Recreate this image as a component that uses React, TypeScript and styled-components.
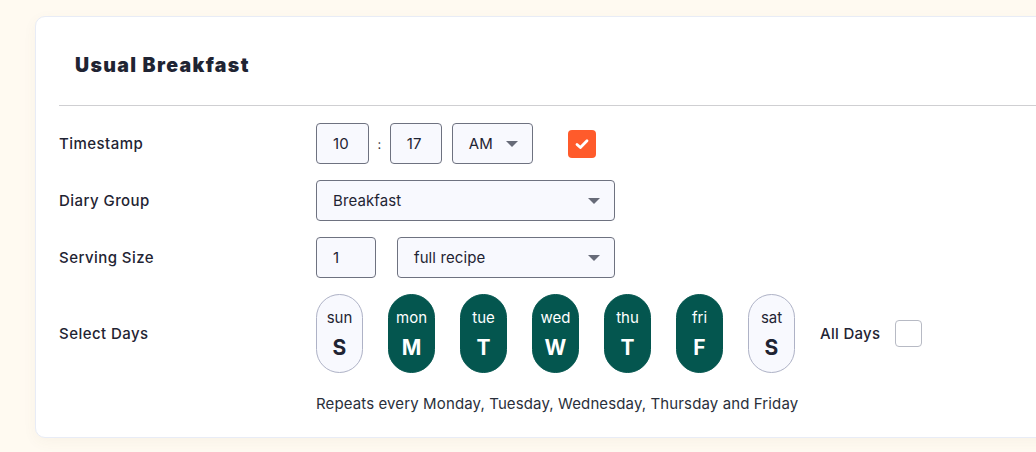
import React from "react";
import styled, { createGlobalStyle } from "styled-components";

const Global = createGlobalStyle`
  html, body { margin: 0; padding: 0; }
  body {
    background: #fffaf1;
    font-family: Inter, "Noto Sans", sans-serif;
    color: #1f2433;
    overflow: hidden;
  }
`;

const Page = styled.div`
  padding: 16px 0 0 35px;
  width: 1036px;
  height: 452px;
  box-sizing: border-box;
  overflow: hidden;
`;

const Card = styled.section`
  width: 1100px;
  height: 422px;
  box-sizing: border-box;
  background: #fff;
  border: 1px solid #e8ecf6;
  border-radius: 10px;
  box-shadow: 0 4px 14px rgba(120, 100, 60, 0.05);
  padding: 0 0 0 23px;
`;

const Header = styled.header`
  height: 89px;
  display: flex;
  align-items: center;
  padding: 0 0 0 16px;
  border-bottom: 1px solid #cfcfd2;
  box-sizing: border-box;
`;

const Title = styled.h1`
  margin: 0;
  padding-top: 8px;
  font-family: Inter, sans-serif;
  font-weight: 900;
  font-size: 19.5px;
  letter-spacing: 1.35px;
  color: #1f2433;
`;

const Form = styled.div`
  display: grid;
  grid-template-columns: 257px 1fr;
  row-gap: 16px;
  padding-top: 17px;
  align-items: center;
`;

const Label = styled.div`
  font-size: 15px;
  font-weight: 500;
  letter-spacing: 0.45px;
  color: #1f2433;
`;

const Controls = styled.div<{ $gap?: number }>`
  display: flex;
  align-items: center;
  gap: ${(p) => p.$gap ?? 10}px;
  height: 41px;
`;

const Box = styled.div<{ $w: number }>`
  width: ${(p) => p.$w}px;
  height: 41px;
  box-sizing: border-box;
  border: 1px solid #6e7280;
  border-radius: 4px;
  background: #f8f9fe;
  display: flex;
  align-items: center;
  padding: 0 16px;
  font-size: 15px;
  letter-spacing: 0.1px;
  color: #1f2433;
`;

const SelectBox = styled(Box)`
  justify-content: space-between;
  padding-right: 14px;
`;

const Caret = styled.span`
  width: 0;
  height: 0;
  border-left: 6px solid transparent;
  border-right: 6px solid transparent;
  border-top: 6px solid #676b78;
`;

const Colon = styled.span`
  font-size: 13px;
  color: #333;
  margin: 0 -1.5px;
`;

const Check = styled.div<{ $on?: boolean }>`
  width: ${(p) => (p.$on ? 28 : 27)}px;
  height: ${(p) => (p.$on ? 28 : 27)}px;
  box-sizing: border-box;
  border-radius: 4px;
  background: ${(p) => (p.$on ? "#ff5b2b" : "#fff")};
  border: ${(p) => (p.$on ? "none" : "1px solid #b7bac4")};
  display: flex;
  align-items: center;
  justify-content: center;
`;

const DaysRow = styled.div`
  display: flex;
  align-items: center;
  gap: 25px;
  height: 79px;
`;

const Pill = styled.div<{ $on: boolean }>`
  width: 47px;
  height: 79px;
  box-sizing: border-box;
  border-radius: 24px;
  border: 1px solid ${(p) => (p.$on ? "#04564f" : "#aeb2c6")};
  background: ${(p) => (p.$on ? "#04564f" : "#f8f9fe")};
  color: ${(p) => (p.$on ? "#ffffff" : "#1f2433")};
  display: flex;
  flex-direction: column;
  align-items: center;
  padding-top: 14px;
`;

const DayName = styled.span`
  font-size: 15px;
  line-height: 18px;
`;

const DayLetter = styled.span`
  font-size: 21px;
  font-weight: 700;
  line-height: 24px;
  margin-top: 9px;
`;

const AllDays = styled.div`
  display: flex;
  align-items: center;
  gap: 15px;
  font-size: 15px;
  font-weight: 500;
  letter-spacing: 0.3px;
`;

const Repeat = styled.div`
  grid-column: 2;
  font-size: 15px;
  letter-spacing: 0.12px;
  color: #2a2f3b;
  margin-top: 5px;
`;

const days = [
  ["sun", "S", false],
  ["mon", "M", true],
  ["tue", "T", true],
  ["wed", "W", true],
  ["thu", "T", true],
  ["fri", "F", true],
  ["sat", "S", false],
] as const;

export default function App() {
  return (
    <>
      <Global />
      <Page>
        <Card>
          <Header>
            <Title>Usual Breakfast</Title>
          </Header>
          <Form>
            <Label>Timestamp</Label>
            <Controls>
              <Box $w={53}>10</Box>
              <Colon>:</Colon>
              <Box $w={52}>17</Box>
              <SelectBox $w={81}>
                AM <Caret />
              </SelectBox>
              <Check $on style={{ marginLeft: 25 }}>
                <svg width="16" height="16" viewBox="0 0 16 16">
                  <path d="M3 8.4 L6.4 11.6 L13 4.8" fill="none" stroke="#fff" strokeWidth="2.8" strokeLinecap="round" strokeLinejoin="round" />
                </svg>
              </Check>
            </Controls>

            <Label>Diary Group</Label>
            <Controls>
              <SelectBox $w={299}>
                Breakfast <Caret />
              </SelectBox>
            </Controls>

            <Label>Serving Size</Label>
            <Controls $gap={21}>
              <Box $w={60}>1</Box>
              <SelectBox $w={218}>
                full recipe <Caret />
              </SelectBox>
            </Controls>

            <Label>Select Days</Label>
            <DaysRow>
              {days.map(([n, l, on], i) => (
                <Pill key={i} $on={on}>
                  <DayName>{n}</DayName>
                  <DayLetter>{l}</DayLetter>
                </Pill>
              ))}
              <AllDays>
                All Days
                <Check />
              </AllDays>
            </DaysRow>

            <Repeat>Repeats every Monday, Tuesday, Wednesday, Thursday and Friday</Repeat>
          </Form>
        </Card>
      </Page>
    </>
  );
}
